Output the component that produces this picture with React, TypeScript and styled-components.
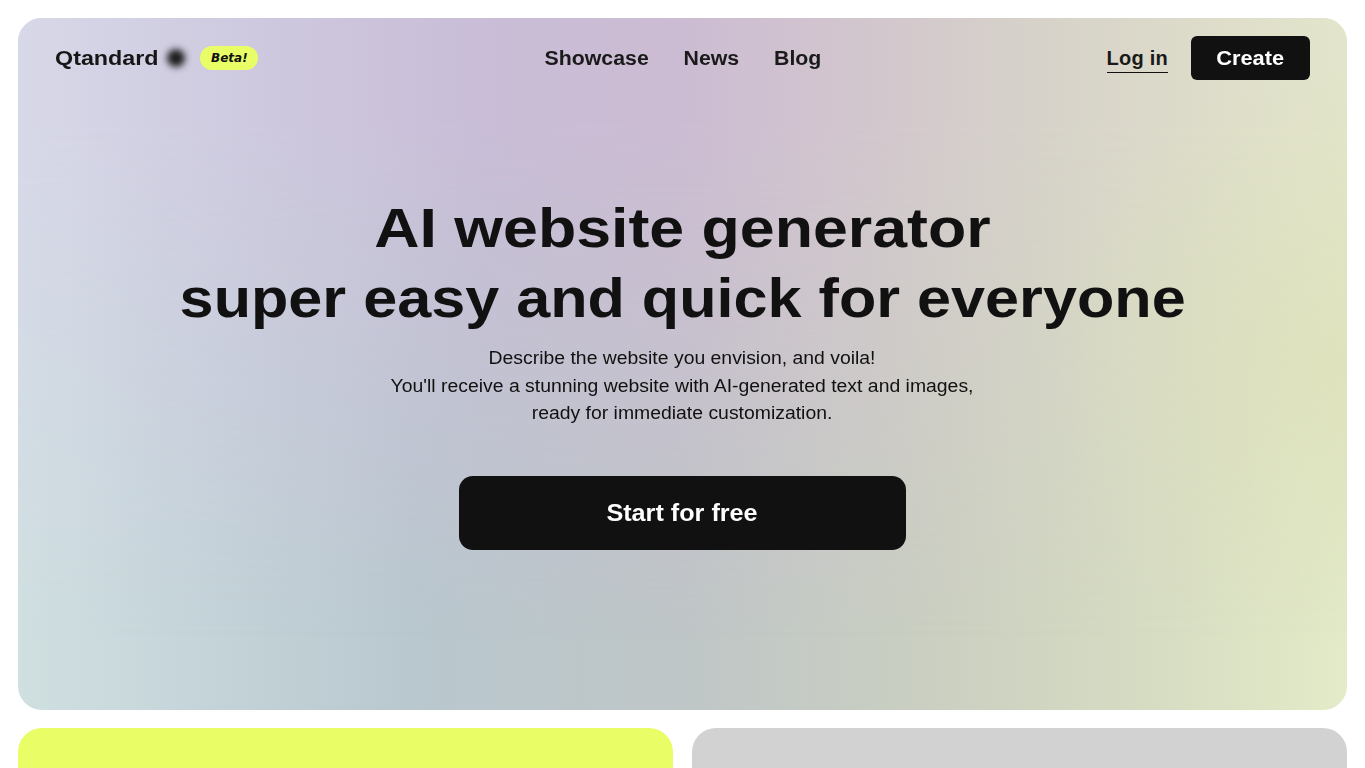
import React from "react";
import styled, { createGlobalStyle } from "styled-components";

const GlobalStyle = createGlobalStyle`
    html, body {
        margin: 0;
        padding: 0;
        background: #ffffff;
        overflow: hidden;
    }
    body {
        font-family: "Liberation Sans", Arial, sans-serif;
        color: #111111;
    }
`;

const Page = styled.div`
    display: flex;
    flex-direction: column;
    gap: 18px;
    padding: 18px;
`;

const Hero = styled.section`
    position: relative;
    height: 692px;
    border-radius: 24px;
    overflow: hidden;
    display: flex;
    flex-direction: column;
    background: linear-gradient(90deg, #d0e0e1 0%, #c3d3d8 15%, #b9c8ce 30%, #bfc6c7 50%, #cbd0c1 70%, #d6dcc2 85%, #e3ebc8 100%);

    /* top half of the wash, fades out towards the bottom */
    &::before {
        content: "";
        position: absolute;
        inset: 0;
        background: linear-gradient(90deg, #d7d8e8 0%, #cfcbe0 15%, #c9bdd7 35%, #ccbcd3 50%, #d1c3cf 60%, #d7d3c9 78%, #e3e5cb 100%);
        -webkit-mask-image: linear-gradient(180deg, #000 0%, #000 15%, transparent 90%);
        mask-image: linear-gradient(180deg, #000 0%, #000 15%, transparent 90%);
    }

    /* warmer patch on the right edge */
    &::after {
        content: "";
        position: absolute;
        inset: 0;
        background: radial-gradient(ellipse 300px 300px at 100% 50%, rgba(219, 223, 180, 0.6), rgba(219, 223, 180, 0));
    }
`;

const Header = styled.header`
    position: relative;
    z-index: 1;
    display: grid;
    grid-template-columns: 1fr auto 1fr;
    align-items: center;
    padding: 18px 37px 0;
    height: 44px;
`;

const Brand = styled.div`
    display: flex;
    align-items: center;
`;

const Stretch = styled.span<{ $x: number; $origin?: string }>`
    display: inline-block;
    transform: scaleX(${(props) => props.$x});
    transform-origin: ${(props) => props.$origin || "center"} center;
`;

const BrandName = styled.span`
    font-size: 21px;
    font-weight: 700;
    color: #161616;
`;

const BrandDot = styled.span`
    width: 18px;
    height: 18px;
    margin-left: 19px;
    border-radius: 50%;
    background: #1a1a1a;
    filter: blur(3.5px);
`;

const BetaBadge = styled.span`
    margin-left: 15px;
    width: 58px;
    height: 24px;
    border-radius: 12px;
    background: #e8fd66;
    display: flex;
    align-items: center;
    justify-content: center;
    font-family: "DejaVu Sans", sans-serif;
    font-size: 12px;
    font-weight: 700;
    font-style: italic;
    color: #111111;
`;

const Nav = styled.nav`
    display: flex;
    gap: 32.7px;
    transform: scaleX(1.065);
`;

const NavLink = styled.a`
    font-size: 20px;
    font-weight: 700;
    color: #1a1a1a;
`;

const Actions = styled.div`
    display: flex;
    justify-content: flex-end;
    align-items: center;
    gap: 23px;
`;

const LogIn = styled.a`
    font-size: 20px;
    font-weight: 700;
    letter-spacing: 0.25px;
    color: #1a1a1a;
    line-height: 28px;
    border-bottom: 1px solid #111111;
`;

const CreateButton = styled.button`
    width: 119px;
    height: 44px;
    border: none;
    border-radius: 6px;
    background: #111111;
    color: #ffffff;
    font-family: inherit;
    font-size: 20px;
    font-weight: 700;
`;

const HeroBody = styled.div`
    position: relative;
    z-index: 1;
    display: flex;
    flex-direction: column;
    align-items: center;
    padding-top: 113px;
`;

const Title = styled.h1`
    margin: 0;
    font-size: 56px;
    line-height: 70px;
    font-weight: 700;
    text-align: center;
    color: #111111;
    white-space: nowrap;
`;

const Lead = styled.p`
    margin: 12px 0 0;
    font-size: 17.5px;
    line-height: 27.5px;
    text-align: center;
    color: #111111;
    white-space: nowrap;
    transform: scaleX(1.108);
`;

const StartButton = styled.button`
    margin-top: 48px;
    width: 447px;
    height: 74px;
    border: none;
    border-radius: 14px;
    background: #111111;
    color: #ffffff;
    font-family: inherit;
    font-size: 24px;
    font-weight: 700;
`;

const Cards = styled.div`
    display: grid;
    grid-template-columns: 1fr 1fr;
    gap: 19px;
`;

const Card = styled.div<{ $tone: string }>`
    height: 420px;
    border-radius: 24px;
    background: ${(props) => props.$tone};
`;

export default function App() {
    return (
        <Page>
            <GlobalStyle />
            <Hero>
                <Header>
                    <Brand>
                        <BrandName>
                            <Stretch $x={1.11} $origin="left">Qtandard</Stretch>
                        </BrandName>
                        <BrandDot />
                        <BetaBadge>Beta!</BetaBadge>
                    </Brand>
                    <Nav>
                        <NavLink>Showcase</NavLink>
                        <NavLink>News</NavLink>
                        <NavLink>Blog</NavLink>
                    </Nav>
                    <Actions>
                        <LogIn>Log in</LogIn>
                        <CreateButton>
                            <Stretch $x={1.09}>Create</Stretch>
                        </CreateButton>
                    </Actions>
                </Header>
                <HeroBody>
                    <Title>
                        <Stretch $x={1.119}>AI website generator</Stretch>
                        <br />
                        <Stretch $x={1.092}>super easy and quick for everyone</Stretch>
                    </Title>
                    <Lead>
                        Describe the website you envision, and voila!
                        <br />
                        You'll receive a stunning website with AI-generated text and images,
                        <br />
                        ready for immediate customization.
                    </Lead>
                    <StartButton>
                        <Stretch $x={1.05}>Start for free</Stretch>
                    </StartButton>
                </HeroBody>
            </Hero>
            <Cards>
                <Card $tone="#e8fd66" />
                <Card $tone="#d2d2d2" />
            </Cards>
        </Page>
    );
}
